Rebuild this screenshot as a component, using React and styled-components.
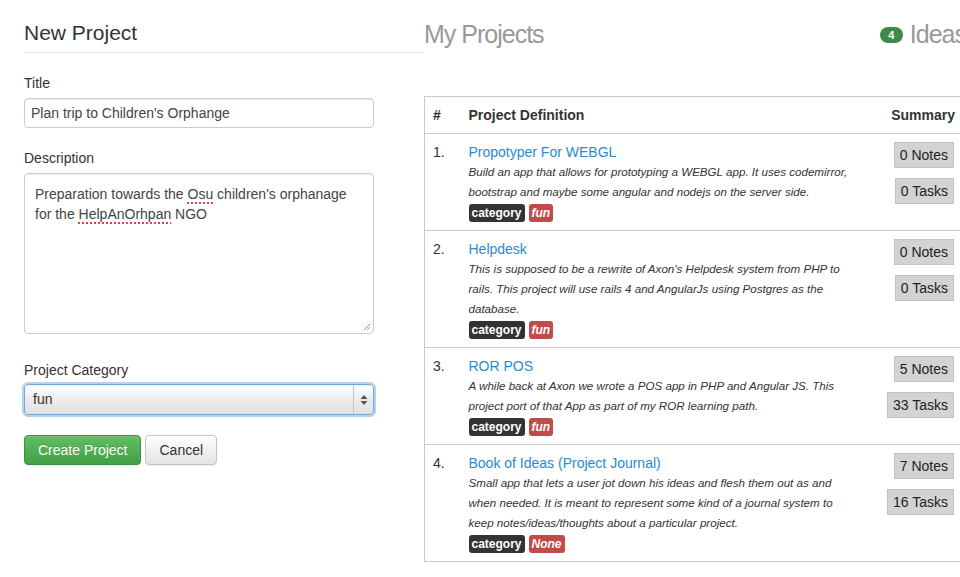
import React from 'react';
import styled, { createGlobalStyle } from 'styled-components';

const GlobalStyle = createGlobalStyle`
  html, body {
    margin: 0;
    padding: 0;
    background: #fff;
    overflow: hidden;
  }
  body {
    font-family: "Liberation Sans", Arial, sans-serif;
    font-size: 14px;
    line-height: 20px;
    color: #333;
  }
`;

const projects = [
  {
    id: 1,
    name: 'Propotyper For WEBGL',
    description:
      'Build an app that allows for prototyping a WEBGL app. It uses codemirror, bootstrap and maybe some angular and nodejs on the server side.',
    category: 'fun',
    notes: 0,
    tasks: 0,
  },
  {
    id: 2,
    name: 'Helpdesk',
    description:
      "This is supposed to be a rewrite of Axon's Helpdesk system from PHP to rails. This project will use rails 4 and AngularJs using Postgres as the database.",
    category: 'fun',
    notes: 0,
    tasks: 0,
  },
  {
    id: 3,
    name: 'ROR POS',
    description:
      'A while back at Axon we wrote a POS app in PHP and Angular JS. This project port of that App as part of my ROR learning path.',
    category: 'fun',
    notes: 5,
    tasks: 33,
  },
  {
    id: 4,
    name: 'Book of Ideas (Project Journal)',
    description:
      'Small app that lets a user jot down his ideas and flesh them out as and when needed. It is meant to represent some kind of a journal system to keep notes/ideas/thoughts about a particular project.',
    category: 'None',
    notes: 7,
    tasks: 16,
  },
];

const Page = () => (
  <PageWrapper>
    <FormColumn>
      <FormHeading>New Project</FormHeading>
      <FormGroup>
        <Label>Title</Label>
        <TextInput readOnly value="Plan trip to Children's Orphange" />
      </FormGroup>
      <FormGroup>
        <Label>Description</Label>
        <TextArea>
          Preparation towards the <Misspelt>Osu</Misspelt> children's orphanage
          for the <Misspelt>HelpAnOrhpan</Misspelt> NGO
          <ResizeGrip width="8" height="8" viewBox="0 0 8 8">
            <path d="M1 7 L7 1 M4 7 L7 4" stroke="#999" strokeWidth="1" fill="none" />
          </ResizeGrip>
        </TextArea>
      </FormGroup>
      <FormGroup>
        <Label $tight>Project Category</Label>
        <SelectBox>
          <SelectValue>fun</SelectValue>
          <SelectArrows>
            <svg width="8" height="12" viewBox="0 0 8 12">
              <path d="M4 1 L7.5 5 L0.5 5 Z M4 11 L7.5 7 L0.5 7 Z" fill="#555" />
            </svg>
          </SelectArrows>
        </SelectBox>
      </FormGroup>
      <Actions>
        <Button $primary>Create Project</Button>
        <Button>Cancel</Button>
      </Actions>
    </FormColumn>

    <ListColumn>
      <ListHeader>
        <ListTitle>My Projects</ListTitle>
        <IdeasCount>
          <CountBadge>4</CountBadge>
          <ListTitle as="span">Ideas</ListTitle>
        </IdeasCount>
      </ListHeader>
      <ProjectTable>
        <thead>
          <tr>
            <HeadCell $width="36px">#</HeadCell>
            <HeadCell>Project Definition</HeadCell>
            <HeadCell $width="100px" $align="right">Summary</HeadCell>
          </tr>
        </thead>
        <tbody>
          {projects.map((p) => (
            <tr key={p.id}>
              <Cell>{p.id}.</Cell>
              <Cell>
                <ProjectLink href="#">{p.name}</ProjectLink>
                <Description>{p.description}</Description>
                <Tags>
                  <Tag>category</Tag>
                  <Tag $danger>{p.category}</Tag>
                </Tags>
              </Cell>
              <Cell $align="right">
                <Counter>{p.notes} Notes</Counter>
                <Counter>{p.tasks} Tasks</Counter>
              </Cell>
            </tr>
          ))}
        </tbody>
      </ProjectTable>
    </ListColumn>
  </PageWrapper>
);

const App = () => (
  <>
    <GlobalStyle />
    <Page />
  </>
);

const PageWrapper = styled.div`
  display: flex;
  align-items: flex-start;
  width: 1000px;
  padding-left: 24px;
`;

const FormColumn = styled.section`
  width: 400px;
  flex-shrink: 0;
`;

const FormHeading = styled.h3`
  margin: 0 0 20px;
  padding: 20px 0 6px;
  font-size: 21px;
  line-height: 26px;
  font-weight: normal;
  color: #333;
  border-bottom: 1px solid #e5e5e5;
`;

const FormGroup = styled.div`
  width: 350px;
  margin-bottom: 20px;
`;

const Label = styled.label`
  display: block;
  margin-bottom: ${(p) => (p.$tight ? '4px' : '5px')};
  font-size: 14px;
  line-height: 20px;
  color: #333;
`;

const TextInput = styled.input`
  box-sizing: border-box;
  display: block;
  width: 100%;
  height: 30px;
  padding: 4px 6px;
  font-family: "Liberation Sans", Arial, sans-serif;
  font-size: 14px;
  color: #444;
  border: 1px solid #ccc;
  border-radius: 4px;
  box-shadow: inset 0 1px 1px rgba(0, 0, 0, 0.075);
  outline: none;
`;

const TextArea = styled.div`
  position: relative;
  box-sizing: border-box;
  height: 161px;
  margin-bottom: 26px;
  padding: 10px 10px;
  font-size: 14px;
  line-height: 20px;
  color: #444;
  border: 1px solid #ccc;
  border-radius: 4px;
  box-shadow: inset 0 1px 1px rgba(0, 0, 0, 0.075);
`;

const Misspelt = styled.span`
  text-decoration: underline dotted #e0443e;
  text-decoration-thickness: 2px;
  text-underline-offset: 3px;
`;

const ResizeGrip = styled.svg`
  position: absolute;
  right: 2px;
  bottom: 2px;
`;

const SelectBox = styled.div`
  box-sizing: border-box;
  display: flex;
  align-items: stretch;
  height: 31px;
  border: 1px solid #74a9dc;
  border-radius: 4px;
  background: linear-gradient(#ffffff, #ececec 50%, #e2e2e2);
  box-shadow: 0 0 0 2px rgba(122, 174, 224, 0.55), inset 0 1px 1px rgba(0, 0, 0, 0.05);
`;

const SelectValue = styled.span`
  flex: 1;
  padding-left: 8px;
  font-size: 14px;
  line-height: 29px;
  color: #333;
`;

const SelectArrows = styled.span`
  display: flex;
  align-items: center;
  justify-content: center;
  width: 19px;
  border-left: 1px solid #c4c4c4;
`;

const Actions = styled.div`
  display: flex;
  gap: 4px;
`;

const Button = styled.button`
  height: 30px;
  padding: 0 13px;
  font-family: "Liberation Sans", Arial, sans-serif;
  font-size: 14px;
  border-radius: 4px;
  cursor: pointer;
  color: ${(p) => (p.$primary ? '#fff' : '#333')};
  border: 1px solid ${(p) => (p.$primary ? '#3e8f3e' : '#c4c4c4')};
  background: ${(p) =>
    p.$primary
      ? 'linear-gradient(#5fbf62, #43a047)'
      : 'linear-gradient(#ffffff, #e3e3e3)'};
  box-shadow: inset 0 1px 0 rgba(255, 255, 255, 0.15), 0 1px 1px rgba(0, 0, 0, 0.075);
  text-shadow: ${(p) => (p.$primary ? '0 -1px 0 rgba(0,0,0,0.15)' : 'none')};
`;

const ListColumn = styled.section`
  width: 540px;
  flex-shrink: 0;
`;

const ListHeader = styled.div`
  display: flex;
  justify-content: space-between;
  align-items: center;
  width: 542px;
  padding-top: 19px;
  margin-bottom: 47px;
`;

const ListTitle = styled.h2`
  margin: 0;
  font-size: 25px;
  line-height: 30px;
  font-weight: normal;
  letter-spacing: -1px;
  color: #999;
`;

const IdeasCount = styled.div`
  display: flex;
  align-items: center;
  gap: 7px;
`;

const CountBadge = styled.span`
  display: inline-block;
  min-width: 11px;
  padding: 0 6px;
  height: 16px;
  margin-top: 2px;
  font-size: 11px;
  line-height: 16px;
  font-weight: bold;
  text-align: center;
  color: #fff;
  background: #3d8b47;
  border-radius: 8px;
`;

const ProjectTable = styled.table`
  width: 100%;
  border-collapse: collapse;
  table-layout: fixed;
  border: 1px solid #c8c8c8;
`;

const HeadCell = styled.th`
  box-sizing: border-box;
  width: ${(p) => p.$width || 'auto'};
  padding: 8px;
  font-size: 14px;
  line-height: 20px;
  text-align: ${(p) => p.$align || 'left'};
  color: #333;
`;

const Cell = styled.td`
  padding: 8px;
  vertical-align: top;
  text-align: ${(p) => p.$align || 'left'};
  border-top: 1px solid #c8c8c8;
  font-size: 14px;
  line-height: 20px;
`;

const ProjectLink = styled.a`
  display: block;
  font-size: 14px;
  line-height: 20px;
  color: #2a8ad0;
  text-decoration: none;
`;

const Description = styled.p`
  margin: 0;
  font-size: 11.6px;
  line-height: 20px;
  font-style: italic;
  color: #333;
`;

const Tags = styled.div`
  display: flex;
  gap: 4px;
  margin-top: 2px;
`;

const Tag = styled.span`
  padding: 2px 3px;
  font-size: 12px;
  line-height: 14px;
  font-weight: bold;
  font-style: ${(p) => (p.$danger ? 'italic' : 'normal')};
  color: #fff;
  background: ${(p) => (p.$danger ? '#c24b49' : '#333')};
  border-radius: 3px;
`;

const Counter = styled.div`
  width: fit-content;
  margin: 0 1px 10px auto;
  padding: 3px 5px;
  font-size: 14px;
  line-height: 18px;
  color: #222;
  background: #d3d3d3;
  border: 1px solid #c2c2c2;
`;

export default App;
